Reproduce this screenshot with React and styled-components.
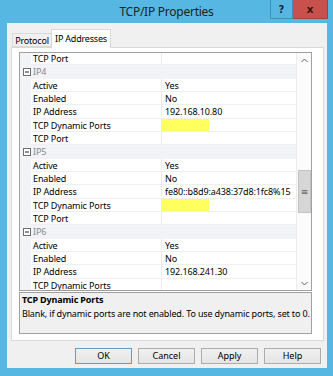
import React from "react";
import styled, { createGlobalStyle } from "styled-components";

const GlobalStyle = createGlobalStyle`
  html, body { margin: 0; padding: 0; background: #fff; }
  body { font-family: "Noto Sans", "DejaVu Sans", sans-serif; }
`;

const rows = [
  { name: "TCP Port" },
  { category: "IP4" },
  { name: "Active", value: "Yes" },
  { name: "Enabled", value: "No" },
  { name: "IP Address", value: "192.168.10.80" },
  { name: "TCP Dynamic Ports", marked: true },
  { name: "TCP Port" },
  { category: "IP5" },
  { name: "Active", value: "Yes" },
  { name: "Enabled", value: "No" },
  { name: "IP Address", value: "fe80::b8d9:a438:37d8:1fc8%15" },
  { name: "TCP Dynamic Ports", marked: true },
  { name: "TCP Port" },
  { category: "IP6" },
  { name: "Active", value: "Yes" },
  { name: "Enabled", value: "No" },
  { name: "IP Address", value: "192.168.241.30" },
  { name: "TCP Dynamic Ports" },
];

const buttons = ["OK", "Cancel", "Apply", "Help"];

function MinusBox() {
  return (
    <svg width="8" height="8" viewBox="0 0 8 8">
      <rect x="0.5" y="0.5" width="7" height="7" fill="#fff" stroke="#6e6e6e" />
      <line x1="2" y1="4" x2="6" y2="4" stroke="#222" />
    </svg>
  );
}

function Chevron({ down }) {
  return (
    <svg width="7" height="5" viewBox="0 0 7 5">
      <polyline
        points={down ? "0.5,1 3.5,4 6.5,1" : "0.5,4 3.5,1 6.5,4"}
        fill="none"
        stroke="#606060"
        strokeWidth="1"
      />
    </svg>
  );
}

export default function App() {
  return (
    <>
      <GlobalStyle />
      <Window>
        <TitleBar>
          <span />
          <Title>TCP/IP Properties</Title>
          <Caption>
            <CaptionButton>?</CaptionButton>
            <CaptionButton $close>x</CaptionButton>
          </Caption>
        </TitleBar>

        <Client>
          <TabStrip>
            <Tab $width={39}>Protocol</Tab>
            <Tab $width={60} $active>IP Addresses</Tab>
          </TabStrip>

          <Panel>
            <Grid>
              <Rows>
                {rows.map((r, i) =>
                  r.category ? (
                    <Row key={i} $category>
                      <Gutter><MinusBox /></Gutter>
                      <CategoryName>{r.category}</CategoryName>
                    </Row>
                  ) : (
                    <Row key={i}>
                      <Gutter />
                      <NameCell>{r.name}</NameCell>
                      <ValueCell>
                        {r.marked ? <Marker /> : r.value}
                      </ValueCell>
                    </Row>
                  )
                )}
              </Rows>
              <Scrollbar>
                <ArrowBox><Chevron /></ArrowBox>
                <Track $offset={103}>
                  <Thumb>≡</Thumb>
                </Track>
                <ArrowBox><Chevron down /></ArrowBox>
              </Scrollbar>
            </Grid>

            <Description>
              <DescTitle>TCP Dynamic Ports</DescTitle>
              <DescText>
                Blank, if dynamic ports are not enabled. To use dynamic ports, set to 0.
              </DescText>
            </Description>
          </Panel>

          <ButtonRow>
            {buttons.map(b => (
              <DialogButton key={b} $default={b === "OK"}>{b}</DialogButton>
            ))}
          </ButtonRow>
        </Client>
      </Window>
    </>
  );
}

const Window = styled.div`
  width: 333px;
  height: 376px;
  box-sizing: border-box;
  background: #56b7e3;
  display: flex;
  flex-direction: column;
`;

const TitleBar = styled.div`
  height: 23px;
  display: grid;
  grid-template-columns: 1fr auto 1fr;
  align-items: start;
`;

const Title = styled.div`
  font-size: 12px;
  line-height: 24px;
  color: #1f1f1f;
  letter-spacing: -0.25px;
`;

const Caption = styled.div`
  justify-self: end;
  display: flex;
  margin-right: 5px;
`;

const CaptionButton = styled.div`
  width: ${p => (p.$close ? "35px" : "23px")};
  height: 19px;
  box-sizing: border-box;
  display: flex;
  align-items: center;
  justify-content: center;
  font-family: "DejaVu Sans", sans-serif;
  font-weight: bold;
  font-size: ${p => (p.$close ? "11px" : "10px")};
  color: ${p => (p.$close ? "#3b1513" : "#12283a")};
  background: ${p => (p.$close ? "#c8514d" : "#56b7e3")};
  border: 1px solid ${p => (p.$close ? "#a8403c" : "#3f8fb8")};
  border-top: none;
  ${p => p.$close && "border-left: none;"}
`;

const Client = styled.div`
  flex: 1;
  margin: 0 6px 8px 7px;
  background: #f0f0f0;
  display: flex;
  flex-direction: column;
`;

const TabStrip = styled.div`
  display: flex;
  align-items: flex-end;
  margin-top: 6px;
  padding-left: 5px;
  height: 18px;
  position: relative;
  z-index: 1;
`;

const Tab = styled.div`
  box-sizing: border-box;
  width: ${p => p.$width}px;
  height: ${p => (p.$active ? "19px" : "14px")};
  margin-bottom: ${p => (p.$active ? "-1px" : "0")};
  padding-top: ${p => (p.$active ? "1px" : "0")};
  font-size: 9px;
  letter-spacing: -0.2px;
  text-align: center;
  line-height: ${p => (p.$active ? "15px" : "13px")};
  color: #000;
  background: ${p => (p.$active ? "#fff" : "#f0f0f0")};
  border: 1px solid #d9d9d9;
  border-bottom: ${p => (p.$active ? "none" : "1px solid #d9d9d9")};
  ${p => !p.$active && "border-right: none;"}
  white-space: nowrap;
`;

const Panel = styled.div`
  height: 294px;
  box-sizing: border-box;
  margin: 0 3px 0 4px;
  border: 1px solid #d9d9d9;
  background: #fff;
  padding: 4px 11px 6px 7px;
  display: flex;
  flex-direction: column;
`;

const Grid = styled.div`
  height: 239px;
  box-sizing: border-box;
  border: 1px solid #a0a0a0;
  display: flex;
  overflow: hidden;
`;

const Rows = styled.div`
  flex: 1;
  overflow: hidden;
  margin-top: -1px;
`;

const Row = styled.div`
  height: 13.333px;
  display: grid;
  grid-template-columns: 11px 131px 1fr;
  background: ${p => (p.$category ? "#f1f3f6" : "#fff")};
  font-size: 9px;
  letter-spacing: -0.12px;
  line-height: 13px;
`;

const Gutter = styled.div`
  background: #f1f3f6;
  display: flex;
  align-items: center;
  justify-content: center;
  padding-left: 2px;
`;

const NameCell = styled.div`
  padding-left: 2px;
  color: #000;
  border-right: 1px solid #ececec;
  border-bottom: 1px solid #efefef;
  white-space: nowrap;
  overflow: hidden;
`;

const CategoryName = styled.div`
  grid-column: 2 / 4;
  padding-left: 2px;
  color: #8a8a8a;
`;

const ValueCell = styled.div`
  padding-left: 3px;
  color: #000;
  border-bottom: 1px solid #efefef;
  white-space: nowrap;
  overflow: hidden;
  display: flex;
`;

const Marker = styled.div`
  width: 47px;
  margin-left: -3px;
  margin-bottom: -1px;
  background: #ffff5e;
`;

const Scrollbar = styled.div`
  width: 14px;
  border-left: 1px solid #ececec;
  background: #fbfbfb;
  display: flex;
  flex-direction: column;
`;

const ArrowBox = styled.div`
  height: 14px;
  display: flex;
  align-items: center;
  justify-content: center;
`;

const Track = styled.div`
  flex: 1;
  padding-top: ${p => p.$offset}px;
`;

const Thumb = styled.div`
  height: 43px;
  box-sizing: border-box;
  margin: 0 0 0 1px;
  background: #d6d6d6;
  border: 1px solid #c2c2c2;
  display: flex;
  align-items: center;
  justify-content: center;
  font-size: 9px;
  color: #606060;
`;

const Description = styled.div`
  margin-top: 1px;
  height: 42px;
  box-sizing: border-box;
  border: 1px solid #a0a0a0;
  background: #f0f0f0;
  padding: 0 2px;
  font-size: 9px;
  letter-spacing: -0.15px;
  color: #000;
`;

const DescTitle = styled.div`
  font-weight: bold;
  line-height: 13px;
  margin-top: 0px;
`;

const DescText = styled.div`
  line-height: 15px;
  white-space: nowrap;
`;

const ButtonRow = styled.div`
  display: flex;
  justify-content: flex-end;
  gap: 6px;
  margin-top: 7px;
  padding-right: 6px;
`;

const DialogButton = styled.div`
  width: 57px;
  height: 16px;
  box-sizing: border-box;
  border: 1px solid ${p => (p.$default ? "#5a9fd0" : "#acacac")};
  background: linear-gradient(#f0f0f0, #e5e5e5);
  font-size: 9px;
  line-height: 14px;
  text-align: center;
  color: #000;
`;
